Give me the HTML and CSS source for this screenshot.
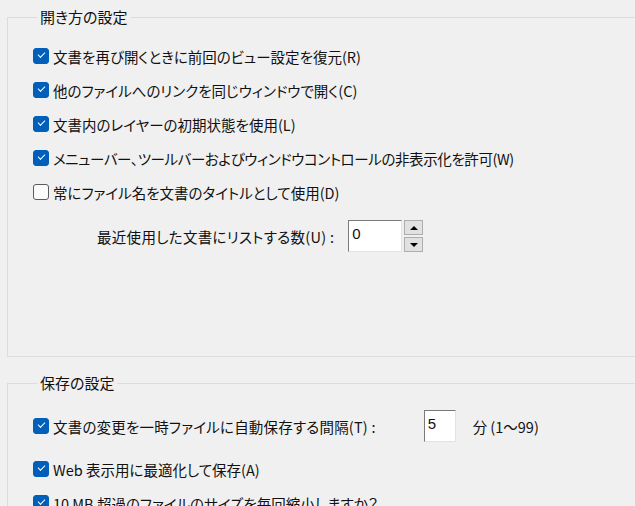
FILE: index.html
```html
<!DOCTYPE html>
<html lang="ja">

<head>
    <meta charset="UTF-8">
    <meta name="viewport" content="width=device-width, initial-scale=1.0">
    <title>環境設定</title>
    <link rel="stylesheet" href="styles.css">
</head>

<body>
    <fieldset class="group groupOpen">
        <legend>開き方の設定</legend>
        <div class="row"><span class="chk on"></span><span>文書を再び開くときに前回のビュー設定を復元(R)</span></div>
        <div class="row"><span class="chk on"></span><span>他のファイルへのリンクを同じウィンドウで開く(C)</span></div>
        <div class="row"><span class="chk on"></span><span>文書内のレイヤーの初期状態を使用(L)</span></div>
        <div class="row"><span class="chk on"></span><span class="tight">メニューバー、ツールバーおよびウィンドウコントロールの非表示化を許可(W)</span></div>
        <div class="row"><span class="chk"></span><span>常にファイル名を文書のタイトルとして使用(D)</span></div>
        <div class="row spinRow">
            <span class="spinLabel">最近使用した文書にリストする数(U) :</span>
            <span class="numBox wide">0</span>
            <span class="spinBtns">
                <span class="spinBtn"><span class="triUp"></span></span>
                <span class="spinBtn"><span class="triDown"></span></span>
            </span>
        </div>
    </fieldset>

    <fieldset class="group groupSave">
        <legend>保存の設定</legend>
        <div class="row first">
            <span class="chk on"></span><span class="wideLabel">文書の変更を一時ファイルに自動保存する間隔(T) :</span>
            <span class="numBox small">5</span>
            <span class="unit">分 (1〜99)</span>
        </div>
        <div class="row"><span class="chk on"></span><span>Web 表示用に最適化して保存(A)</span></div>
        <div class="row"><span class="chk on"></span><span>10 MB 超過のファイルのサイズを毎回縮小しますか？</span></div>
    </fieldset>
</body>

</html>
```

FILE: styles.css
```css
html,
body {
    margin: 0;
    padding: 0;
    overflow: hidden;
}

body {
    background-color: #f0f0f0;
    color: #111;
    font-family: "Noto Sans CJK JP", sans-serif;
    font-size: 14.5px;
    font-feature-settings: "palt";
    width: 700px;
}

.group {
    border: 1px solid #dcdcdc;
    border-right: none;
    margin: 7px 0 0 7px;
    padding: 12px 0 0 25px;
}

.group legend {
    font-size: 15px;
    line-height: 20px;
    padding: 0 3px;
    margin-left: 4px;
}

.groupOpen {
    padding-bottom: 103px;
}

.groupSave {
    margin-top: 16px;
    padding-top: 16px;
}

.row {
    display: flex;
    align-items: center;
    height: 34px;
    white-space: nowrap;
}

.tight {
    letter-spacing: -0.4px;
}

.wideLabel {
    letter-spacing: 0.2px;
}

.groupSave .first {
    margin-bottom: 9px;
}

.chk {
    box-sizing: border-box;
    width: 16px;
    height: 16px;
    margin-right: 4px;
    border: 1px solid #5c5c5c;
    border-radius: 3px;
    background: #fbfbfb;
    position: relative;
    flex: none;
}

.chk.on {
    border-color: #005fb8;
    background: #005fb8;
}

.chk.on::after {
    content: "";
    position: absolute;
    left: 4px;
    top: 3px;
    width: 6px;
    height: 3px;
    border-left: 1.5px solid #fff;
    border-bottom: 1.5px solid #fff;
    transform: rotate(-45deg);
}

.spinRow {
    margin-top: 10px;
}

.spinRow .spinLabel {
    margin-left: 64px;
    margin-right: 14px;
    letter-spacing: 0.3px;
}

.numBox {
    box-sizing: border-box;
    height: 32px;
    align-self: center;
    background: #fff;
    border: 1px solid;
    border-color: #7a7a7a #e3e3e3 #e3e3e3 #7a7a7a;
    padding: 3px 0 0 3px;
    line-height: 20px;
    font-size: 15px;
    font-family: "Liberation Sans", sans-serif;
}

.numBox.wide {
    width: 54px;
}

.numBox.small {
    width: 32px;
    margin-left: 48px;
}

.unit {
    margin-left: 17px;
}

.spinBtns {
    display: flex;
    flex-direction: column;
    gap: 2px;
    margin-left: 2px;
}

.spinBtn {
    box-sizing: border-box;
    width: 19px;
    height: 15px;
    border: 1px solid #adadad;
    background: #e1e1e1;
    display: flex;
    align-items: center;
    justify-content: center;
}

.triUp {
    width: 0;
    height: 0;
    border-left: 4px solid transparent;
    border-right: 4px solid transparent;
    border-bottom: 4px solid #000;
}

.triDown {
    width: 0;
    height: 0;
    border-left: 4px solid transparent;
    border-right: 4px solid transparent;
    border-top: 4px solid #000;
}
```
